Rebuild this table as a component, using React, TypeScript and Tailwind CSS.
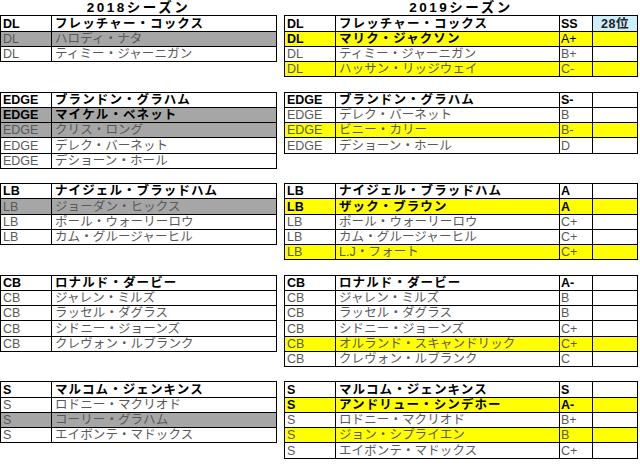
import React from 'react';

type Row = {
  pos: string;
  name: string;
  grade?: string;
  fill?: 'grey' | 'yellow';
  bold?: boolean;
  thinGrade?: boolean;
  rank?: string;
};

type Section = { height: string; left: Row[]; right: Row[] };

const sections: Section[] = [
  {
    height: 'h-[76.25px]',
    left: [
      { pos: 'DL', name: 'フレッチャー・コックス', bold: true },
      { pos: 'DL', name: 'ハロディ・ナタ', fill: 'grey' },
      { pos: 'DL', name: 'ティミー・ジャーニガン' },
    ],
    right: [
      { pos: 'DL', name: 'フレッチャー・コックス', grade: 'SS', bold: true, rank: '28位' },
      { pos: 'DL', name: 'マリク・ジャクソン', grade: 'A+', fill: 'yellow', bold: true, thinGrade: true },
      { pos: 'DL', name: 'ティミー・ジャーニガン', grade: 'B+' },
      { pos: 'DL', name: 'ハッサン・リッジウェイ', grade: 'C-', fill: 'yellow' },
    ],
  },
  {
    height: 'h-[91.5px]',
    left: [
      { pos: 'EDGE', name: 'ブランドン・グラハム', bold: true },
      { pos: 'EDGE', name: 'マイケル・ベネット', fill: 'grey', bold: true },
      { pos: 'EDGE', name: 'クリス・ロング', fill: 'grey' },
      { pos: 'EDGE', name: 'デレク・バーネット' },
      { pos: 'EDGE', name: 'デショーン・ホール' },
    ],
    right: [
      { pos: 'EDGE', name: 'ブランドン・グラハム', grade: 'S-', bold: true },
      { pos: 'EDGE', name: 'デレク・バーネット', grade: 'B' },
      { pos: 'EDGE', name: 'ビニー・カリー', grade: 'B-', fill: 'yellow' },
      { pos: 'EDGE', name: 'デショーン・ホール', grade: 'D' },
    ],
  },
  {
    height: 'h-[91.5px]',
    left: [
      { pos: 'LB', name: 'ナイジェル・ブラッドハム', bold: true },
      { pos: 'LB', name: 'ジョーダン・ヒックス', fill: 'grey' },
      { pos: 'LB', name: 'ポール・ウォーリーロウ' },
      { pos: 'LB', name: 'カム・グルージャーヒル' },
    ],
    right: [
      { pos: 'LB', name: 'ナイジェル・ブラッドハム', grade: 'A', bold: true },
      { pos: 'LB', name: 'ザック・ブラウン', grade: 'A', fill: 'yellow', bold: true },
      { pos: 'LB', name: 'ポール・ウォーリーロウ', grade: 'C+' },
      { pos: 'LB', name: 'カム・グルージャーヒル', grade: 'C+' },
      { pos: 'LB', name: 'L.J・フォート', grade: 'C+', fill: 'yellow' },
    ],
  },
  {
    height: 'h-[106.75px]',
    left: [
      { pos: 'CB', name: 'ロナルド・ダービー', bold: true },
      { pos: 'CB', name: 'ジャレン・ミルズ' },
      { pos: 'CB', name: 'ラッセル・ダグラス' },
      { pos: 'CB', name: 'シドニー・ジョーンズ' },
      { pos: 'CB', name: 'クレヴォン・ルブランク' },
    ],
    right: [
      { pos: 'CB', name: 'ロナルド・ダービー', grade: 'A-', bold: true },
      { pos: 'CB', name: 'ジャレン・ミルズ', grade: 'B' },
      { pos: 'CB', name: 'ラッセル・ダグラス', grade: 'B' },
      { pos: 'CB', name: 'シドニー・ジョーンズ', grade: 'C+' },
      { pos: 'CB', name: 'オルランド・スキャンドリック', grade: 'C+', fill: 'yellow' },
      { pos: 'CB', name: 'クレヴォン・ルブランク', grade: 'C' },
    ],
  },
  {
    height: 'h-[91.5px]',
    left: [
      { pos: 'S', name: 'マルコム・ジェンキンス', bold: true },
      { pos: 'S', name: 'ロドニー・マクリオド' },
      { pos: 'S', name: 'コーリー・グラハム', fill: 'grey' },
      { pos: 'S', name: 'エイボンテ・マドックス' },
    ],
    right: [
      { pos: 'S', name: 'マルコム・ジェンキンス', grade: 'S', bold: true },
      { pos: 'S', name: 'アンドリュー・シンデホー', grade: 'A-', fill: 'yellow', bold: true },
      { pos: 'S', name: 'ロドニー・マクリオド', grade: 'B+' },
      { pos: 'S', name: 'ジョン・シプライエン', grade: 'B', fill: 'yellow' },
      { pos: 'S', name: 'エイボンテ・マドックス', grade: 'C+' },
    ],
  },
];

function SheetRow({ row, full }: { row: Row; full: boolean }) {
  const fill = row.fill === 'grey' ? 'bg-[#a6a6a6]' : row.fill === 'yellow' ? 'bg-[#ffff00]' : 'bg-white';
  const text = row.bold ? 'font-bold text-black' : 'text-[#595959]';
  return (
    <div className={`flex h-[15.25px] border-b border-black ${fill}`}>
      <div className={`flex w-[51px] shrink-0 items-center border-r border-black pl-[2px] pt-[1px] text-[12.5px] ${text}`}>
        {row.pos}
      </div>
      <div
        className={`flex w-[224px] shrink-0 items-center overflow-hidden whitespace-nowrap pl-[3px] pt-[1px] text-[12.5px] ${text} ${
          row.bold ? 'tracking-[1.1px]' : 'tracking-[0.1px]'
        } ${full ? 'border-r border-black' : ''}`}
      >
        {row.name}
      </div>
      {full ? (
        <>
          <div
            className={`flex w-[33px] shrink-0 items-center border-r border-black pl-[1px] pt-[1px] text-[12.5px] ${
              row.bold ? (row.thinGrade ? 'text-black' : 'font-bold text-black') : 'text-[#595959]'
            }`}
          >
            {row.grade}
          </div>
          <div
            className={`flex w-[44px] shrink-0 items-center justify-center pt-[1px] text-[12.5px] font-bold tracking-[0.5px] text-[#222] ${
              row.rank ? 'bg-[#cdeefb]' : ''
            }`}
          >
            {row.rank}
          </div>
        </>
      ) : null}
    </div>
  );
}

function Sheet({ rows, full }: { rows: Row[]; full: boolean }) {
  return (
    <div className={`border-x border-t border-black ${full ? 'w-[354px]' : 'w-[277px]'}`}>
      {rows.map((row, i) => (
        <SheetRow key={i} row={row} full={full} />
      ))}
    </div>
  );
}

export default function App() {
  return (
    <main className="h-[467px] w-[640px] overflow-hidden bg-white font-['Liberation_Sans','Noto_Sans_CJK_JP',sans-serif] leading-none">
      <div className="flex h-[15.25px] items-center gap-[7px] pt-[1px] text-[13.5px] font-bold tracking-[2.5px] text-black">
        <div className="w-[277px] text-center">2018シーズン</div>
        <div className="w-[354px] text-center">2019シーズン</div>
      </div>
      {sections.map((s, i) => (
        <section key={i} className={`flex items-start gap-[7px] ${s.height}`}>
          <Sheet rows={s.left} full={false} />
          <Sheet rows={s.right} full />
        </section>
      ))}
    </main>
  );
}
